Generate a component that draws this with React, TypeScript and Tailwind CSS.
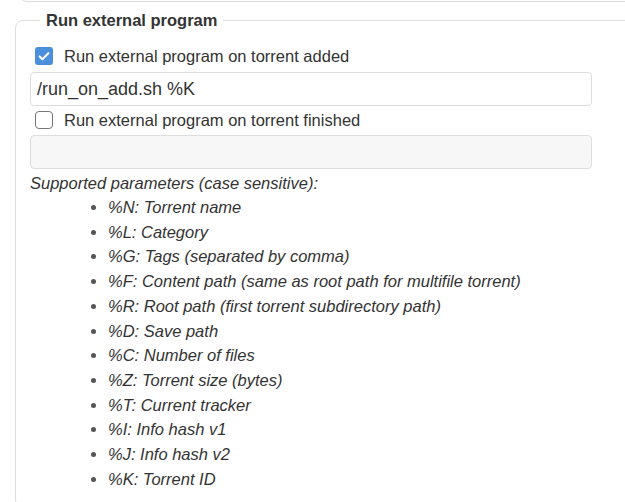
import React from "react";

const params = [
  "%N: Torrent name",
  "%L: Category",
  "%G: Tags (separated by comma)",
  "%F: Content path (same as root path for multifile torrent)",
  "%R: Root path (first torrent subdirectory path)",
  "%D: Save path",
  "%C: Number of files",
  "%Z: Torrent size (bytes)",
  "%T: Current tracker",
  "%I: Info hash v1",
  "%J: Info hash v2",
  "%K: Torrent ID",
];

function Check({ checked }: { checked: boolean }) {
  if (checked) {
    return (
      <span className="w-[18px] h-[18px] rounded-[3px] bg-[#4a8fdb] flex items-center justify-center shrink-0">
        <svg viewBox="0 0 16 16" className="w-[14px] h-[14px]">
          <path d="M3 8.5l3.2 3.2L13 4.8" fill="none" stroke="white" strokeWidth="2.4" strokeLinecap="round" strokeLinejoin="round" />
        </svg>
      </span>
    );
  }
  return <span className="w-[18px] h-[18px] rounded-[4px] border-[1.5px] border-[#767676] bg-white shrink-0" />;
}

export default function App() {
  return (
    <div className="w-[625px] h-[502px] overflow-hidden bg-white text-[#333] font-['Liberation_Sans',Arial,sans-serif] text-[16.5px]">
      {/* bottom of the previous section */}
      <div className="-mt-[10px] ml-[19px] w-[700px] h-[12px] border-l border-b border-[#ddd] rounded-bl-[8px]" />

      <fieldset className="mt-[6px] ml-[15px] w-[660px] border border-[#ddd] rounded-[8px] pl-[14px] pt-[12px] pb-4">
        <legend className="ml-[10px] px-[6px] font-bold text-[16.5px] leading-[24px] text-[#333]">Run external program</legend>

        <label className="flex items-center gap-[11px] h-[24px] pl-[5px]">
          <Check checked />
          <span className="leading-[24px]">Run external program on torrent added</span>
        </label>
        <div className="mt-[4px] w-[562px] h-[34px] border border-[#ddd] rounded-[4px] flex items-center px-[6px] text-[18px]">
          /run_on_add.sh %K
        </div>

        <label className="mt-[2px] flex items-center gap-[11px] h-[24px] pl-[5px]">
          <Check checked={false} />
          <span className="leading-[24px]">Run external program on torrent finished</span>
        </label>
        <div className="mt-[3px] w-[562px] h-[34px] border border-[#ddd] rounded-[4px] bg-[#f7f7f7]" />

        <p className="mt-[2px] italic leading-[24px]">Supported parameters (case sensitive):</p>
        <ul className="list-disc pl-[78px] italic marker:text-[#555]">
          {params.map((p) => (
            <li key={p} className="leading-[24.7px]">{p}</li>
          ))}
        </ul>
      </fieldset>
    </div>
  );
}
